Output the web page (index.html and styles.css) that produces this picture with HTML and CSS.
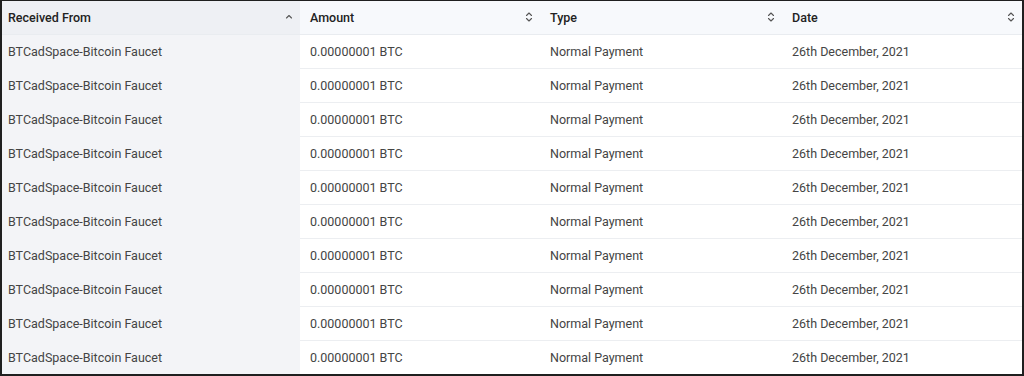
FILE: index.html
```html
<!DOCTYPE html>
<html>
<head>
<meta charset="utf-8">
<link rel="stylesheet" href="styles.css">
</head>
<body>
<div class="frame">
  <table class="grid">
    <colgroup>
      <col class="c1"><col class="c2"><col class="c3"><col class="c4">
    </colgroup>
    <thead>
      <tr>
        <th class="sorted"><div class="hd"><span>Received From</span>
          <svg class="ico" viewBox="0 0 10 10"><path d="M2.5 6 L5 3.5 L7.5 6" /></svg></div></th>
        <th><div class="hd"><span>Amount</span>
          <svg class="ico" viewBox="0 0 10 12"><path d="M2.5 4.5 L5 2 L7.5 4.5 M2.5 7.5 L5 10 L7.5 7.5" /></svg></div></th>
        <th><div class="hd"><span>Type</span>
          <svg class="ico" viewBox="0 0 10 12"><path d="M2.5 4.5 L5 2 L7.5 4.5 M2.5 7.5 L5 10 L7.5 7.5" /></svg></div></th>
        <th><div class="hd"><span>Date</span>
          <svg class="ico" viewBox="0 0 10 12"><path d="M2.5 4.5 L5 2 L7.5 4.5 M2.5 7.5 L5 10 L7.5 7.5" /></svg></div></th>
      </tr>
    </thead>
    <tbody>
      <tr><td class="sorted">BTCadSpace-Bitcoin Faucet</td><td>0.00000001 BTC</td><td>Normal Payment</td><td>26th December, 2021</td></tr>
      <tr><td class="sorted">BTCadSpace-Bitcoin Faucet</td><td>0.00000001 BTC</td><td>Normal Payment</td><td>26th December, 2021</td></tr>
      <tr><td class="sorted">BTCadSpace-Bitcoin Faucet</td><td>0.00000001 BTC</td><td>Normal Payment</td><td>26th December, 2021</td></tr>
      <tr><td class="sorted">BTCadSpace-Bitcoin Faucet</td><td>0.00000001 BTC</td><td>Normal Payment</td><td>26th December, 2021</td></tr>
      <tr><td class="sorted">BTCadSpace-Bitcoin Faucet</td><td>0.00000001 BTC</td><td>Normal Payment</td><td>26th December, 2021</td></tr>
      <tr><td class="sorted">BTCadSpace-Bitcoin Faucet</td><td>0.00000001 BTC</td><td>Normal Payment</td><td>26th December, 2021</td></tr>
      <tr><td class="sorted">BTCadSpace-Bitcoin Faucet</td><td>0.00000001 BTC</td><td>Normal Payment</td><td>26th December, 2021</td></tr>
      <tr><td class="sorted">BTCadSpace-Bitcoin Faucet</td><td>0.00000001 BTC</td><td>Normal Payment</td><td>26th December, 2021</td></tr>
      <tr><td class="sorted">BTCadSpace-Bitcoin Faucet</td><td>0.00000001 BTC</td><td>Normal Payment</td><td>26th December, 2021</td></tr>
      <tr><td class="sorted">BTCadSpace-Bitcoin Faucet</td><td>0.00000001 BTC</td><td>Normal Payment</td><td>26th December, 2021</td></tr>
    </tbody>
  </table>
</div>
</body>
</html>
```

FILE: styles.css
```css
* { box-sizing: border-box; }
html, body { margin: 0; padding: 0; background: #fff; }
.frame {
  width: 1024px;
  height: 376px;
  border: 2px solid #1f1f1f;
  border-top-width: 1px;
  overflow: hidden;
  font-family: Roboto, "Liberation Sans", sans-serif;
  font-size: 12.5px;
  color: #444;
}
.grid {
  width: 1020px;
  border-collapse: collapse;
  table-layout: fixed;
}
.c1 { width: 298px; }
.c2 { width: 240px; }
.c3 { width: 242px; }
.c4 { width: 240px; }
th {
  height: 33px;
  padding: 0 6px 0 10px;
  background: #f7f9fc;
  font-weight: 500;
  color: #222;
  text-align: left;
  border-bottom: 1px solid #e9ecf0;
}
th.sorted { background: #eef0f4; padding-left: 6px; }
.hd {
  display: flex;
  align-items: center;
  justify-content: space-between;
}
.ico {
  width: 10px;
  height: 12px;
  fill: none;
  stroke: #555;
  stroke-width: 1.1;
  stroke-linecap: round;
  stroke-linejoin: round;
}
td {
  height: 34px;
  padding: 0 8px 0 10px;
  border-bottom: 1px solid #eceef1;
  white-space: nowrap;
}
td.sorted { background: #f3f4f7; border-bottom-color: #f3f4f7; padding-left: 6px; }
tbody tr:last-child td { border-bottom: none; }
```
